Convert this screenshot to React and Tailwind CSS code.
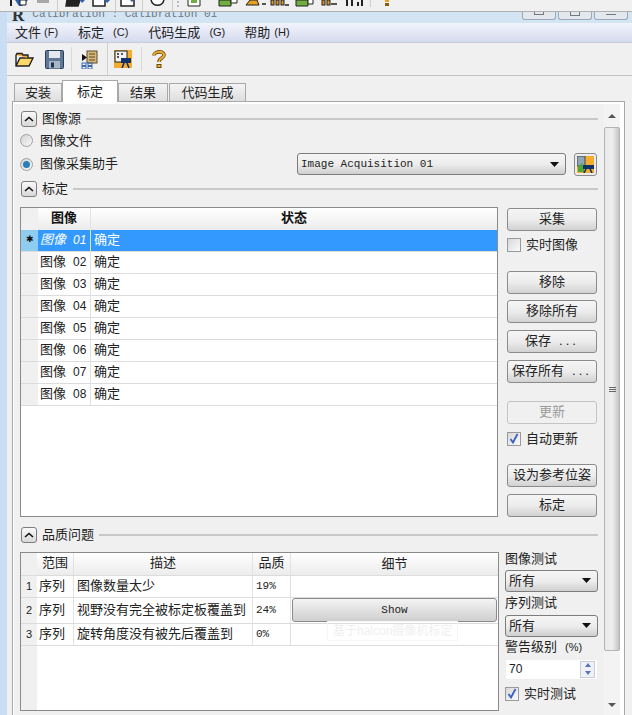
const Btn = ({ children, disabled, className = "" }) => (
  <div
    className={`h-[23px] w-[90px] shrink-0 flex items-center justify-center rounded-[3px] border text-[13px] whitespace-nowrap ${
      disabled
        ? "border-[#c4c4c4] bg-[#f0f0f0] text-[#9a9a9a]"
        : "border-[#8b8b8b] bg-gradient-to-b from-[#f6f6f6] via-[#ececec] to-[#d2d2d2] text-[#222]"
    } ${className}`}
  >
    {children}
  </div>
);

const Dots = () => <span className="ml-[8px] tracking-[3px]">...</span>;

const Check = ({ checked, label }) => (
  <div className="flex items-center gap-[5px] text-[13px] text-[#222] h-[18px]">
    <div className="w-[14px] h-[14px] border border-[#9a9a9a] bg-gradient-to-br from-[#d8d8d8] to-[#fbfbfb] flex items-center justify-center">
      {checked && (
        <svg width="10" height="11" viewBox="0 0 10 11">
          <path d="M1.5 6 L4 9.5 L8.5 1" fill="none" stroke="#3a5fc0" strokeWidth="1.8" />
        </svg>
      )}
    </div>
    <span>{label}</span>
  </div>
);

const Radio = ({ on, label }) => (
  <div className="flex items-center gap-[7px] text-[13px] text-[#222]">
    <div className="w-[13px] h-[13px] rounded-full border border-[#a0a0a0] bg-gradient-to-br from-[#d4d4d4] to-[#f8f8f8] flex items-center justify-center">
      {on && <div className="w-[7px] h-[7px] rounded-full bg-[#2a7fb8]" />}
    </div>
    <span>{label}</span>
  </div>
);

const GroupHead = ({ title, className = "" }) => (
  <div className={`flex items-center h-[17px] ${className}`}>
    <div className="w-[16px] h-[16px] ml-px rounded-[3px] border border-[#7d7d7d] bg-gradient-to-b from-[#fafafa] to-[#d8d8d8] flex items-center justify-center">
      <svg width="10" height="6" viewBox="0 0 10 6">
        <path d="M1 5 L5 1.5 L9 5" fill="none" stroke="#111" strokeWidth="1.6" />
      </svg>
    </div>
    <span className="ml-[5px] text-[13px] text-[#222]">{title}</span>
    <div className="flex-1 ml-[5px] h-[2px] bg-[#c8c8c8]" />
  </div>
);

const Caret = () => (
  <svg width="9" height="5" viewBox="0 0 9 5">
    <path d="M0 0 H9 L4.5 5 Z" fill="#111" />
  </svg>
);

const Combo = ({ children, className = "" }) => (
  <div
    className={`flex items-center justify-between pl-[3px] pr-[6px] rounded-[3px] border border-[#7d7d7d] bg-gradient-to-b from-[#f5f5f5] via-[#ededed] to-[#cfcfcf] text-[#222] ${className}`}
  >
    {children}
    <Caret />
  </div>
);

const HelpIcon = () => (
  <svg width="14" height="18" viewBox="0 0 14 18">
    <path d="M2 5.5 C2 1 12 0.5 12 5 C12 8 7 8 7 12" fill="none" stroke="#6b4a10" strokeWidth="3.6" />
    <path d="M2 5.5 C2 1 12 0.5 12 5 C12 8 7 8 7 12" fill="none" stroke="#f0b030" strokeWidth="2" />
    <rect x="4.5" y="14" width="5" height="4" fill="#6b4a10" />
    <rect x="5.5" y="15" width="3" height="2" fill="#f0b030" />
  </svg>
);

const ToolIcons = () => (
  <div className="flex items-center h-full pl-[8px]">
    <svg width="19" height="15" viewBox="0 0 19 15">
      <path d="M1 3 L1 14 L14 14 L18 6 L5 6 L1 14" fill="#ffd76a" stroke="#222" strokeWidth="1.4" />
      <path d="M1 3 L2 1.5 L7 1.5 L8 3 L13 3 L13 6" fill="#f4a83a" stroke="#222" strokeWidth="1.4" />
    </svg>
    <svg className="ml-[11px]" width="19" height="19" viewBox="0 0 19 19">
      <rect x="0.5" y="0.5" width="18" height="18" rx="1" fill="#5f7793" stroke="#2a3f5a" />
      <rect x="4" y="1" width="11" height="7" fill="#e4e9ef" />
      <rect x="4" y="11" width="11" height="7.5" fill="#a8b6c6" />
      <rect x="6" y="12.5" width="3" height="5" fill="#1d3550" />
    </svg>
    <div className="ml-[7px] w-px h-[24px] bg-[#d8d8d8]" />
    <svg className="ml-[9px]" width="17" height="19" viewBox="0 0 17 19">
      <rect x="6" y="1" width="10" height="12" fill="#d8b878" stroke="#5a4a2a" />
      <path d="M8 4 H14 M8 7 H14 M8 10 H14" stroke="#5a4a2a" />
      <path d="M1 4 L6 7.5 L1 11 Z" fill="#111" />
      <rect x="1" y="13" width="4" height="2.5" fill="none" stroke="#3a6ab0" />
      <rect x="7" y="13" width="4" height="2.5" fill="none" stroke="#3a6ab0" />
      <rect x="1" y="16.5" width="4" height="2.5" fill="none" stroke="#3a6ab0" />
      <rect x="7" y="16.5" width="4" height="2.5" fill="none" stroke="#3a6ab0" />
    </svg>
    <div className="ml-[9px] w-px h-[32px] bg-[#d0d0d0]" />
    <svg className="ml-[6px]" width="18" height="18" viewBox="0 0 18 18">
      <rect width="18" height="18" fill="#f5ad2f" />
      <rect x="1" y="1" width="12" height="11" fill="#f4f4f4" stroke="#222" />
      <path d="M3 4 H5 M7 4 H9 M3 7 H5" stroke="#222" strokeWidth="1.4" />
      <rect x="7" y="8" width="10" height="5" fill="#12306a" />
      <path d="M10 13 L8 18 M13 13 L15 18" stroke="#12306a" strokeWidth="1.6" />
    </svg>
    <div className="ml-[9px] w-px h-[24px] bg-[#d8d8d8]" />
    <div className="ml-[10px] flex">
      <HelpIcon />
    </div>
  </div>
);

// top edge of the window behind, only the lower rim of its toolbar shows
const TopStrip = () => (
  <svg className="block" width="632" height="11" viewBox="0 0 632 11">
    <path d="M11 0 V6" stroke="#222" strokeWidth="2" />
    <path d="M15 0 H28 L22 6 H19 Z" fill="#2b5fb0" />
    <path d="M20 0 H26 V5 H20 Z" fill="#fff" stroke="#222" />
    <rect x="37" y="0" width="12" height="3" fill="#a8a8a8" />
    <g stroke="#222" strokeWidth="1.5">
      <path d="M67 0 L66 6 H78 L80 0 Z" fill="#222" />
      <path d="M93 0 V6 H105 V0" fill="#fff" />
      <path d="M121 0 V6 H134 V0" fill="#fff" />
      <path d="M151 0 C153 7 162 7 164 0" fill="#fff" />
    </g>
    <path d="M80 0 H85 L82 3 Z M105 0 H110 L107 3 Z M130 0 H134 L132 2 Z" fill="#2b5fb0" />
    <rect x="57" y="0" width="1" height="11" fill="#ccc" />
    <rect x="115" y="0" width="1" height="11" fill="#ccc" />
    <rect x="142" y="0" width="1" height="11" fill="#ccc" />
    <rect x="172" y="0" width="1" height="11" fill="#ccc" />
    <rect x="177" y="1" width="2" height="2" fill="#bbb" />
    <rect x="177" y="5" width="2" height="2" fill="#bbb" />
    <path d="M188 0 V6 H200 V0" fill="#fff" stroke="#222" />
    <rect x="191" y="0" width="6" height="3" fill="#6fae3c" />
    <g stroke="#222">
      <path d="M219 0 V6 H231 V0 Z" fill="#6fae3c" />
      <path d="M296 0 V6 H308 V0 Z" fill="#6fae3c" />
      <path d="M308 0 V4 H313 V0" fill="#fff" />
      <path d="M231 0 V3 H237 V0" fill="#fff" />
      <path d="M246 5 L250 0 H257 L259 5 Z" fill="#e8a020" />
    </g>
    <g fill="#d89820" stroke="#222">
      <rect x="271" y="0" width="3" height="5" />
      <rect x="276" y="0" width="3" height="5" />
      <rect x="281" y="0" width="3" height="5" />
      <rect x="322" y="0" width="3" height="5" />
      <rect x="327" y="0" width="3" height="5" />
    </g>
    <path d="M262 4 H266 M285 5 H289 M331 4 H337" stroke="#222" strokeWidth="1.5" />
    <path d="M347 6 V0 M352 6 V0 M358 6 V2 M362 6 V0" stroke="#222" strokeWidth="2" />
    <rect x="370" y="0" width="1" height="7" fill="#ccc" />
    <rect x="385" y="0" width="4" height="2" fill="#e5a11c" />
    <rect x="385" y="3" width="4" height="3" fill="#8a5a10" />
  </svg>
);

const WinBtn = ({ children }) => (
  <div className="w-[34px] h-[8px] border border-t-0 border-[#9aa8b8] rounded-b-[3px] bg-[#e2e8ee] flex items-start justify-center">
    {children}
  </div>
);

const imageRows = ["01", "02", "03", "04", "05", "06", "07", "08"];

const ImageTable = () => (
  <div className="w-[478px] h-[310px] border border-[#8a8a8a] bg-white overflow-hidden">
    <div className="flex h-[22px] bg-gradient-to-b from-white to-[#ececec] text-[13px] font-bold text-[#111]">
      <div className="w-[17px] bg-[#f0f0f0]" />
      <div className="w-[53px] text-center border-r border-[#e2e2e2]">图像</div>
      <div className="flex-1 text-center">状态</div>
    </div>
    {imageRows.map((n, i) => (
      <div
        key={n}
        className={`flex h-[22px] items-center border-b border-[#dcdcdc] text-[13px] ${
          i === 0 ? "bg-[#3399ff] text-white" : "text-[#222]"
        }`}
      >
        <div
          className={`w-[17px] h-full flex items-center justify-center text-[9px] ${
            i === 0 ? "bg-[#8fcdf0] text-[#111]" : "bg-[#f0f0f0]"
          }`}
        >
          {i === 0 ? "✱" : ""}
        </div>
        <div className={`w-[53px] h-full pl-[2px] flex items-center border-r border-[#e2e2e2] ${i === 0 ? "italic border-[#8fc4f5]" : ""}`}>
          图像<span className="ml-[7px] text-[12px]">{n}</span>
        </div>
        <div className="pl-[3px]">确定</div>
      </div>
    ))}
  </div>
);

const quality = [
  { n: 1, h: "h-[22px]", desc: "图像数量太少", q: "19%" },
  { n: 2, h: "h-[26px]", desc: "视野没有完全被标定板覆盖到", q: "24%", show: true },
  { n: 3, h: "h-[22px]", desc: "旋转角度没有被先后覆盖到", q: "0%" },
];

const QualityTable = () => (
  <div className="relative w-[479px] h-[159px] border border-[#8a8a8a] bg-white overflow-hidden flex flex-col">
    <div className="flex h-[23px] shrink-0 items-center bg-gradient-to-b from-white to-[#ececec] text-[13px] text-[#222] border-b border-[#dcdcdc]">
      <div className="w-[16px] h-full bg-[#f0f0f0]" />
      <div className="w-[37px] h-full text-center border-r border-[#e2e2e2]">范围</div>
      <div className="w-[179px] h-full text-center border-r border-[#e2e2e2]">描述</div>
      <div className="w-[38px] h-full text-center border-r border-[#e2e2e2]">品质</div>
      <div className="flex-1 text-center">细节</div>
    </div>
    {quality.map((r) => (
      <div key={r.n} className={`flex ${r.h} shrink-0 items-center border-b border-[#dcdcdc] text-[13px] text-[#222]`}>
        <div className="w-[16px] h-full bg-[#f0f0f0] flex items-center justify-center text-[11px]">{r.n}</div>
        <div className="w-[37px] h-full pl-[2px] flex items-center border-r border-[#e2e2e2]">序列</div>
        <div className="w-[179px] h-full pl-[3px] flex items-center border-r border-[#e2e2e2] whitespace-nowrap overflow-hidden">{r.desc}</div>
        <div className="w-[38px] h-full pl-[3px] flex items-center border-r border-[#e2e2e2] font-['Liberation_Mono',monospace] text-[11px]">{r.q}</div>
        {r.show && (
          <div className="flex-1 h-[24px] mx-px rounded-[3px] border border-[#8b8b8b] bg-gradient-to-b from-[#f4f4f4] to-[#cfcfcf] flex items-center justify-center font-['Liberation_Mono',monospace] text-[11px]">
            Show
          </div>
        )}
      </div>
    ))}
    <div className="flex-1 w-[16px] bg-[#f0f0f0]" />
    <div className="absolute left-[306px] top-[68px] px-[5px] h-[20px] border border-[#f6f6f6] text-[12px] leading-[19px] text-[#efefef] whitespace-nowrap">
      基于halcon摄像机标定
    </div>
  </div>
);

const SideButtons = () => (
  <div className="flex flex-col ml-[9px] pt-px">
    <Btn>采集</Btn>
    <div className="mt-[5px]"><Check label="实时图像" /></div>
    <Btn className="mt-[17px]">移除</Btn>
    <Btn className="mt-[6px]">移除所有</Btn>
    <Btn className="mt-[7px]">保存<Dots /></Btn>
    <Btn className="mt-[7px]">保存所有<Dots /></Btn>
    <Btn disabled className="mt-[18px]">更新</Btn>
    <div className="mt-[6px]"><Check checked label="自动更新" /></div>
    <Btn className="mt-[16px]">设为参考位姿</Btn>
    <Btn className="mt-[7px]">标定</Btn>
  </div>
);

const QualitySide = () => (
  <div className="ml-[6px] -mt-px w-[93px] flex flex-col text-[13px] text-[#222] leading-[16px]">
    <div className="h-[19px]">图像测试</div>
    <Combo className="h-[22px]">所有</Combo>
    <div className="h-[23px] pb-[4px] flex items-end">序列测试</div>
    <Combo className="h-[22px]">所有</Combo>
    <div className="h-[22px] pb-[4px] flex items-end">
      警告级别<span className="ml-[8px] text-[11px]">(%)</span>
    </div>
    <div className="h-[21px] flex items-center justify-between bg-white border border-[#eeeeee] pl-[3px] pr-[2px] text-[12px]">
      70
      <div className="w-[15px] h-[17px] border border-[#c8cdd8] flex flex-col items-center justify-around bg-[#eef1f8]">
        <div className="w-0 h-0 border-x-[3px] border-x-transparent border-b-[4px] border-b-[#5a74c0]" />
        <div className="w-0 h-0 border-x-[3px] border-x-transparent border-t-[4px] border-t-[#5a74c0]" />
      </div>
    </div>
    <div className="mt-[5px] flex"><Check checked label="实时测试" /></div>
  </div>
);

const Scrollbar = () => (
  <div className="w-[16px] h-full flex flex-col items-center bg-[#f3f3f3]">
    <div className="h-[23px] flex items-center justify-center">
      <div className="w-0 h-0 border-x-[4px] border-x-transparent border-b-[4px] border-b-[#555]" />
    </div>
    <div className="w-[16px] h-[524px] shrink-0 rounded-[2px] border border-[#b4b4b4] bg-gradient-to-r from-[#e8e8e8] via-[#f0f0f0] to-[#c4c4c4] flex flex-col items-center justify-center gap-px">
      <div className="w-[7px] h-px bg-[#666]" />
      <div className="w-[7px] h-px bg-[#666]" />
      <div className="w-[7px] h-px bg-[#666]" />
    </div>
    <div className="flex-1 flex items-center justify-center pt-[44px]">
      <div className="w-0 h-0 border-x-[4px] border-x-transparent border-t-[4px] border-t-[#555]" />
    </div>
  </div>
);

const tabs = [
  { label: "安装", w: "w-[48px]" },
  { label: "标定", w: "w-[56px]", active: true },
  { label: "结果", w: "w-[50px]" },
  { label: "代码生成", w: "w-[77px] ml-px" },
];

const App = () => (
  <div className="w-[632px] h-[715px] overflow-hidden bg-[#f0f0f0] flex flex-col font-['Liberation_Sans','Noto_Sans_CJK_SC',sans-serif]">
    <div className="h-[12px] shrink-0 border-b border-[#b0b0b0] overflow-hidden">
      <TopStrip />
    </div>
    <div className="flex-1 min-h-0 flex">
      <div className="w-[7px] shrink-0 bg-[#c9def2]" />
      <div className="flex-1 min-w-0 flex flex-col">
        <div className="h-[11px] shrink-0 bg-[#d3e4f3] flex justify-between overflow-hidden pl-[5px] pr-[4px]">
          <div className="flex items-start -mt-[2px] font-['Liberation_Mono',monospace] text-[11px] leading-[9px] text-[#6a7a88] whitespace-nowrap">
            <span className="font-bold text-[17px] leading-[12px] text-[#333] mr-[8px] font-['Liberation_Serif',serif]">R</span>
            Calibration : Calibration 01
          </div>
          <div className="flex gap-[2px]">
            <WinBtn><div className="w-[10px] h-[3px] border border-t-0 border-[#777]" /></WinBtn>
            <WinBtn><div className="w-[10px] h-[4px] border border-t-0 border-[#777]" /></WinBtn>
            <WinBtn><div className="w-[10px] h-[3px] border-b border-[#777]" /></WinBtn>
          </div>
        </div>
        <div className="h-[20px] shrink-0 flex items-center pl-[8px] bg-gradient-to-b from-[#f2f4fb] to-[#d5dbef] border-b border-[#c8ccd8] text-[13px] text-[#222] whitespace-nowrap">
          <span>文件</span><span className="ml-[3px] text-[11px]">(F)</span>
          <span className="ml-[20px]">标定</span><span className="ml-[9px] text-[11px]">(C)</span>
          <span className="ml-[20px]">代码生成</span><span className="ml-[9px] text-[11px]">(G)</span>
          <span className="ml-[19px]">帮助</span><span className="ml-[4px] text-[11px]">(H)</span>
        </div>
        <div className="h-[33px] shrink-0 border-b border-[#c4c4c4]">
          <ToolIcons />
        </div>
        <div className="flex-1 min-h-0 flex flex-col pl-[5px] pr-[7px] pt-[3px]">
          <div className="h-[22px] shrink-0 flex items-end pl-[2px]">
            {tabs.map((t) => (
              <div
                key={t.label}
                className={`${t.w} flex items-center justify-center text-[13px] text-[#222] border border-b-0 border-[#a8a8a8] ${
                  t.active ? "h-[22px] bg-white -mb-px relative z-10" : "h-[18px] bg-gradient-to-b from-[#f4f4f4] to-[#dedede]"
                }`}
              >
                {t.label}
              </div>
            ))}
          </div>
          <div className="flex-1 min-h-0 flex border border-b-0 border-[#a8a8a8] bg-white pl-px pt-[2px] pr-[4px]">
            <div className="flex-1 min-w-0 bg-[#f0f0f0] flex">
              <div className="flex-1 min-w-0 pl-[6px] pr-[6px] pt-[6px] flex flex-col">
                <GroupHead title="图像源" />
                <div className="mt-[4px]"><Radio label="图像文件" /></div>
                <div className="flex items-center justify-between mt-[2px] h-[23px] pr-px">
                  <Radio on label="图像采集助手" />
                  <div className="flex items-center gap-[8px]">
                    <Combo className="w-[269px] h-[22px] font-['Liberation_Mono',monospace] text-[11px]">Image Acquisition 01</Combo>
                    <div className="w-[23px] h-[23px] rounded-[3px] border border-[#8b8b8b] p-[2px] bg-[#ececec]">
                      <svg width="17" height="17" viewBox="0 0 17 17">
                        <rect width="17" height="17" fill="#f5ad2f" />
                        <rect x="0" y="0" width="8" height="10" fill="#8fa6b8" stroke="#444" />
                        <path d="M1 16 V11 L5 7 L7 11 V16 Z" fill="#4ca83a" />
                        <rect x="6" y="9" width="11" height="4" fill="#12306a" />
                        <path d="M9 13 L7 17 M13 13 L15 17" stroke="#12306a" strokeWidth="1.6" />
                      </svg>
                    </div>
                  </div>
                </div>
                <GroupHead title="标定" className="mt-[5px]" />
                <div className="flex mt-[9px]">
                  <ImageTable />
                  <SideButtons />
                </div>
                <GroupHead title="品质问题" className="mt-[10px]" />
                <div className="flex mt-[8px]">
                  <QualityTable />
                  <QualitySide />
                </div>
              </div>
              <Scrollbar />
            </div>
          </div>
        </div>
      </div>
    </div>
  </div>
);

export default App;
